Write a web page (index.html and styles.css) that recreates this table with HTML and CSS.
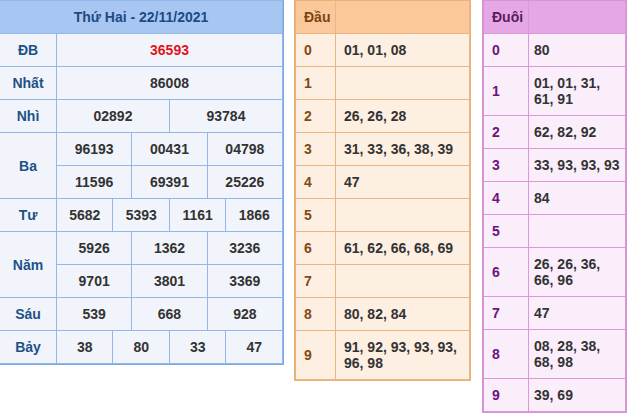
FILE: index.html
```html
<!DOCTYPE html>
<html lang="vi">
<head>
<meta charset="utf-8">
<title>Kết quả xổ số</title>
<link rel="stylesheet" href="styles.css">
</head>
<body>
<div class="wrap">
  <table class="kq">
    <colgroup><col class="c-lbl"><col span="12"></colgroup>
    <tr><th colspan="13" class="kq-head">Thứ Hai - 22/11/2021</th></tr>
    <tr><td class="lbl">ĐB</td><td colspan="12" class="db">36593</td></tr>
    <tr><td class="lbl">Nhất</td><td colspan="12">86008</td></tr>
    <tr><td class="lbl">Nhì</td><td colspan="6">02892</td><td colspan="6">93784</td></tr>
    <tr><td class="lbl" rowspan="2">Ba</td><td colspan="4">96193</td><td colspan="4">00431</td><td colspan="4">04798</td></tr>
    <tr><td colspan="4">11596</td><td colspan="4">69391</td><td colspan="4">25226</td></tr>
    <tr><td class="lbl">Tư</td><td colspan="3">5682</td><td colspan="3">5393</td><td colspan="3">1161</td><td colspan="3">1866</td></tr>
    <tr><td class="lbl" rowspan="2">Năm</td><td colspan="4">5926</td><td colspan="4">1362</td><td colspan="4">3236</td></tr>
    <tr><td colspan="4">9701</td><td colspan="4">3801</td><td colspan="4">3369</td></tr>
    <tr><td class="lbl">Sáu</td><td colspan="4">539</td><td colspan="4">668</td><td colspan="4">928</td></tr>
    <tr><td class="lbl">Bảy</td><td colspan="3">38</td><td colspan="3">80</td><td colspan="3">33</td><td colspan="3">47</td></tr>
  </table>

  <table class="lt dau">
    <colgroup><col class="c-dau"><col></colgroup>
    <tr><th>Đầu</th><th></th></tr>
    <tr><td class="k">0</td><td>01, 01, 08</td></tr>
    <tr><td class="k">1</td><td></td></tr>
    <tr><td class="k">2</td><td>26, 26, 28</td></tr>
    <tr><td class="k">3</td><td>31, 33, 36, 38, 39</td></tr>
    <tr><td class="k">4</td><td>47</td></tr>
    <tr><td class="k">5</td><td></td></tr>
    <tr><td class="k">6</td><td>61, 62, 66, 68, 69</td></tr>
    <tr><td class="k">7</td><td></td></tr>
    <tr><td class="k">8</td><td>80, 82, 84</td></tr>
    <tr><td class="k">9</td><td>91, 92, 93, 93, 93, 96, 98</td></tr>
  </table>

  <table class="lt duoi">
    <colgroup><col class="c-duoi"><col></colgroup>
    <tr><th>Đuôi</th><th></th></tr>
    <tr><td class="k">0</td><td>80</td></tr>
    <tr><td class="k">1</td><td>01, 01, 31, 61, 91</td></tr>
    <tr><td class="k">2</td><td>62, 82, 92</td></tr>
    <tr><td class="k">3</td><td>33, 93, 93, 93</td></tr>
    <tr><td class="k">4</td><td>84</td></tr>
    <tr><td class="k">5</td><td></td></tr>
    <tr><td class="k">6</td><td>26, 26, 36, 66, 96</td></tr>
    <tr><td class="k">7</td><td>47</td></tr>
    <tr><td class="k">8</td><td>08, 28, 38, 68, 98</td></tr>
    <tr><td class="k">9</td><td>39, 69</td></tr>
  </table>
</div>
</body>
</html>
```
FILE: styles.css
```css
html, body {
  margin: 0;
  padding: 0;
  background: #ffffff;
}

body {
  font-family: "Liberation Sans", Arial, sans-serif;
  font-size: 14px;
  font-weight: bold;
  color: #333333;
}

.wrap {
  display: flex;
  align-items: flex-start;
}

table {
  border-collapse: separate;
  border-spacing: 0;
  table-layout: fixed;
}

th, td {
  padding: 8px 8px;
  line-height: 16px;
  height: 16px;
  border-right: 1px solid;
  border-bottom: 1px solid;
  font-weight: bold;
}

/* Result table */
.kq {
  width: 284px;
  border-top: 1px solid #93b7e8;
  border-right: 1px solid #7ea8e2;
  border-bottom: 1px solid #7ea8e2;
  background: #f1f5fb;
}

.kq .c-lbl { width: 57px; }

.kq th, .kq td {
  border-color: #93b7e8;
  text-align: center;
  padding-left: 0;
  padding-right: 0;
}

.kq-head {
  background: #a8c6f2;
  color: #1d4a82;
}

.kq .lbl {
  color: #1c5288;
}

.kq .db {
  color: #e0141e;
}

/* Loto tables */
.lt {
  border-top: 1px solid;
  border-left: 2px solid;
  border-right: 1px solid;
  border-bottom: 1px solid;
}

.lt td, .lt th {
  text-align: left;
}

.dau {
  width: 177px;
  margin-left: 10px;
  border-color: #e9b27a;
  background: #fdefe2;
}

.dau .c-dau { width: 40px; }

.dau th, .dau td { border-color: #ecb682; }

.dau th {
  background: #fbc89b;
  color: #7a4514;
}

.dau .k { color: #7f4a16; }

.duoi {
  width: 145px;
  margin-left: 11px;
  border-color: #d892d6;
  background: #fbeefb;
}

.duoi .c-duoi { width: 45px; }

.duoi th, .duoi td { border-color: #d99ad7; }

.duoi td:not(.k) {
  padding-left: 5px;
  padding-right: 2px;
}

.duoi th {
  background: #e6a8e4;
  color: #5a1d5e;
}

.duoi .k { color: #6a147e; }
```
